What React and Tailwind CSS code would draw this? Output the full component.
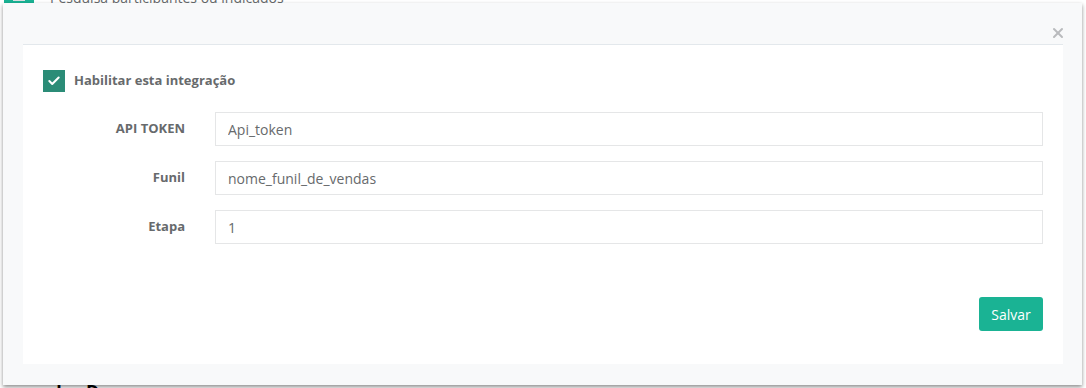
import React, { useState } from 'react';
import { Check, X } from 'lucide-react';

const fields = [
  { label: 'API TOKEN', value: 'Api_token' },
  { label: 'Funil', value: 'nome_funil_de_vendas' },
  { label: 'Etapa', value: '1' },
];

const App = () => {
  const [enabled, setEnabled] = useState(true);
  const [form, setForm] = useState(fields.map(f => f.value));

  return (
    <div className="relative w-[1086px] h-[388px] overflow-hidden bg-white font-['Open_Sans',sans-serif]">
      {/* page behind the modal */}
      <div className="flex items-start gap-4 px-1 -mt-[9px]">
        <div className="w-[30px] h-[12px] bg-[#1ab394] flex items-end justify-center pb-[2px]">
          <div className="w-[12px] h-[6px] bg-[#d9dee0]"></div>
        </div>
        <span className="text-[14px] text-[#676a6c] leading-[14px]">Pesquisa participantes ou indicados</span>
      </div>
      <div className="absolute left-[56px] top-[378px] text-[18px] font-bold text-black tracking-[24px]">ID</div>

      {/* modal */}
      <div className="absolute left-[3px] top-[3px] w-[1079px] h-[382px] bg-[#f8f9fa] shadow-[0_2px_4px_rgba(0,0,0,0.45)] flex flex-col">
        <div className="h-[41px] flex justify-end items-end pr-[16px] pb-[3px]">
          <button className="text-[#b9bbbd] hover:text-gray-500">
            <X className="w-[16px] h-[16px]" strokeWidth={3} />
          </button>
        </div>
        <div className="ml-[20px] mr-[19px] mb-[21px] flex-1 bg-white border-t border-[#e3e8ec] px-[20px] pt-[25px]">
          <label className="flex items-center gap-[9px] cursor-pointer select-none">
            <span
              onClick={() => setEnabled(!enabled)}
              className={enabled
                ? 'w-[22px] h-[22px] bg-[#2b8c77] flex items-center justify-center'
                : 'w-[22px] h-[22px] border border-gray-300 bg-white'}
            >
              {enabled && <Check className="w-[14px] h-[14px] text-white" strokeWidth={3.5} />}
            </span>
            <span className="text-[13px] font-bold text-[#676a6c]">Habilitar esta integração</span>
          </label>

          <div className="mt-[20px] flex flex-col gap-[15px]">
            {fields.map((f, i) => (
              <div key={f.label} className="flex items-center">
                <label className="w-[142px] text-right text-[13px] font-bold text-[#676a6c] -mt-[1px]">{f.label}</label>
                <input
                  type="text"
                  value={form[i]}
                  onChange={(e) => setForm(form.map((v, j) => (j === i ? e.target.value : v)))}
                  className="ml-[30px] flex-1 h-[34px] border border-[#e5e6e7] px-[12px] text-[14px] text-[#676a6c] outline-none focus:border-[#1ab394]"
                />
              </div>
            ))}
          </div>

          <div className="mt-[53px] flex justify-end">
            <button className="w-[64px] h-[34px] rounded-[3px] bg-[#1ab394] text-white text-[14px] hover:bg-[#18a689]">Salvar</button>
          </div>
        </div>
      </div>
    </div>
  );
};

export default App;
